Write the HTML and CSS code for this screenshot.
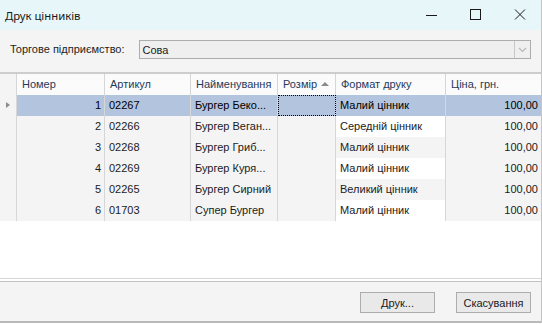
FILE: index.html
```html
<!DOCTYPE html>
<html lang="uk">
<head>
  <meta charset="UTF-8">
  <title>Друк цінників</title>
  <link rel="stylesheet" href="styles.css">
</head>
<body>
  <div class="window">
    <div class="titlebar">
      <span class="title">Друк цінників</span>
      <div class="controls">
        <svg width="45" height="30" viewBox="0 0 45 30"><path d="M20 15.5h11" stroke="#1a1a1a" stroke-width="1"/></svg>
        <svg width="45" height="30" viewBox="0 0 45 30"><rect x="19.5" y="9.5" width="10" height="10" fill="none" stroke="#1a1a1a" stroke-width="1"/></svg>
        <svg width="45" height="30" viewBox="0 0 45 30"><path d="M19 9.5l10 10M29 9.5l-10 10" stroke="#1a1a1a" stroke-width="1"/></svg>
      </div>
    </div>

    <div class="toolbar">
      <label class="field-label">Торгове підприємство:</label>
      <div class="combo">
        <span class="combo-text">Сова</span>
        <span class="combo-btn">
          <svg width="9" height="6" viewBox="0 0 9 6"><path d="M1 1l3.5 3.5L8 1" fill="none" stroke="#b8b8b8" stroke-width="1.2"/></svg>
        </span>
      </div>
    </div>

    <div class="grid">
      <div class="row header">
        <div class="cell ind"></div>
        <div class="cell">Номер</div>
        <div class="cell">Артикул</div>
        <div class="cell">Найменування</div>
        <div class="cell sorted">Розмір<span class="sort-arrow"></span></div>
        <div class="cell">Формат друку</div>
        <div class="cell">Ціна, грн.</div>
      </div>

      <div class="row selected">
        <div class="cell ind"><span class="pointer"></span></div>
        <div class="cell num">1</div>
        <div class="cell">02267</div>
        <div class="cell">Бургер Беко...</div>
        <div class="cell focus"></div>
        <div class="cell">Малий цінник</div>
        <div class="cell num">100,00</div>
      </div>
      <div class="row even">
        <div class="cell ind"></div>
        <div class="cell num">2</div>
        <div class="cell">02266</div>
        <div class="cell">Бургер Веган...</div>
        <div class="cell"></div>
        <div class="cell edit">Середній цінник</div>
        <div class="cell num">100,00</div>
      </div>
      <div class="row">
        <div class="cell ind"></div>
        <div class="cell num">3</div>
        <div class="cell">02268</div>
        <div class="cell">Бургер Гриб...</div>
        <div class="cell"></div>
        <div class="cell edit">Малий цінник</div>
        <div class="cell num">100,00</div>
      </div>
      <div class="row even">
        <div class="cell ind"></div>
        <div class="cell num">4</div>
        <div class="cell">02269</div>
        <div class="cell">Бургер Куря...</div>
        <div class="cell"></div>
        <div class="cell edit">Малий цінник</div>
        <div class="cell num">100,00</div>
      </div>
      <div class="row">
        <div class="cell ind"></div>
        <div class="cell num">5</div>
        <div class="cell">02265</div>
        <div class="cell">Бургер Сирний</div>
        <div class="cell"></div>
        <div class="cell edit">Великий цінник</div>
        <div class="cell num">100,00</div>
      </div>
      <div class="row even">
        <div class="cell ind"></div>
        <div class="cell num">6</div>
        <div class="cell">01703</div>
        <div class="cell">Супер Бургер</div>
        <div class="cell"></div>
        <div class="cell edit">Малий цінник</div>
        <div class="cell num">100,00</div>
      </div>

      <div class="filler"></div>
    </div>

    <div class="footer">
      <button class="button">Друк...</button>
      <button class="button">Скасування</button>
    </div>
  </div>
</body>
</html>
```

FILE: styles.css
```css
body {
  margin: 0;
  width: 542px;
  height: 325px;
  background: #ffffff;
  font-family: "Liberation Sans", Arial, sans-serif;
  font-size: 11px;
  color: #1b1b1b;
  overflow: hidden;
}

.window {
  width: 541px;
  border-right: 1px solid #c4c4c4;
  background: #f4f4f4;
}

/* title bar */
.titlebar {
  height: 30px;
  background: #e7f6f8;
  display: flex;
  align-items: center;
  justify-content: space-between;
}

.title {
  font-family: "Noto Sans", sans-serif;
  font-size: 11.3px;
  color: #1a1a1a;
  padding-left: 5px;
}

.controls {
  display: flex;
}

.controls svg {
  display: block;
}

/* top panel */
.toolbar {
  height: 44px;
  box-sizing: border-box;
  padding: 10px 10px 0;
  display: flex;
  align-items: flex-start;
  gap: 14px;
  border-bottom: 2px solid #cdcdcd;
}

.field-label {
  line-height: 19px;
  color: #1e1e1e;
}

.combo {
  flex: 1;
  height: 19px;
  box-sizing: border-box;
  border: 1px solid #adadad;
  background: #efefef;
  display: flex;
  align-items: center;
}

.combo-text {
  flex: 1;
  padding-left: 3px;
}

.combo-btn {
  width: 15px;
  height: 17px;
  border-left: 1px solid #c9c9c9;
  display: flex;
  align-items: center;
  justify-content: center;
}

/* grid */
.grid {
  height: 204px;
  background: #ffffff;
  display: flex;
  flex-direction: column;
}

.row {
  display: grid;
  grid-template-columns: 17px 88px 86px 87px 58px 110px 95px;
  height: 21px;
  background: #f4f4f4;
}

.cell {
  border-right: 1px solid #d6d6d6;
  padding: 0 4px;
  line-height: 21px;
  white-space: nowrap;
  overflow: hidden;
  position: relative;
}

.cell:last-child {
  border-right: none;
}

.cell.num {
  text-align: right;
  padding-right: 3px;
}

.row.header {
  background: #fbfbfb;
  color: #1f3a5c;
}

.row.header .cell {
  padding-left: 5px;
}

.sort-arrow {
  position: absolute;
  right: 6px;
  top: 8px;
  border-left: 4px solid transparent;
  border-right: 4px solid transparent;
  border-bottom: 4px solid #8a8a8a;
}

.cell.ind {
  padding: 0;
  background: #f4f4f4;
}

.pointer {
  position: absolute;
  left: 6px;
  top: 7px;
  border-top: 3.5px solid transparent;
  border-bottom: 3.5px solid transparent;
  border-left: 4px solid #8d8d8d;
}

.row.selected .cell {
  background: #b3c5de;
  color: #000000;
}

.row.selected .cell.ind {
  background: #f4f4f4;
}

.row.selected .cell.focus {
  outline: 1px dotted #000000;
  outline-offset: -1px;
}

.row.even .cell.edit {
  background: #ffffff;
}

.filler {
  flex: 1;
  background: #ffffff;
}

/* bottom panel */
.footer {
  height: 45px;
  box-sizing: border-box;
  border-top: 1px solid #d6d6d6;
  box-shadow: inset 0 2px 0 #ffffff, inset 0 3px 0 #c2c2c2;
  padding: 13px 10px 0 0;
  display: flex;
  justify-content: flex-end;
  gap: 21px;
  border-bottom: 2px solid #b9b9b9;
}

.button {
  width: 75px;
  height: 21px;
  border: 1px solid #adadad;
  background: #e9e9e9;
  font-family: "Liberation Sans", Arial, sans-serif;
  font-size: 11px;
  color: #1b1b1b;
  padding: 0;
}
```
